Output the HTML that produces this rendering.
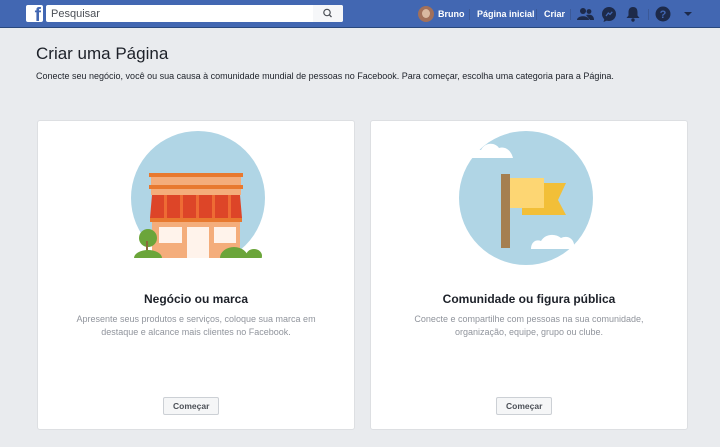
<!DOCTYPE html>
<html><head><meta charset="utf-8"><style>
*{margin:0;padding:0;box-sizing:border-box}
body{width:720px;height:447px;background:#e9ebee;font-family:"Liberation Sans",Arial,sans-serif;position:relative;overflow:hidden}
.bar{position:absolute;left:0;top:0;width:720px;height:28px;background:#4267b2;border-bottom:1px solid #29487d}
.logo{position:absolute;left:26px;top:5px;width:17px;height:17px;background:#fff;border-radius:2px;overflow:hidden}
.logo span{position:absolute;right:2px;top:1px;color:#4267b2;font-weight:bold;font-size:19px;line-height:19px}
.search{position:absolute;left:46px;top:5px;width:297px;height:17px;background:#fff;border-radius:2px}
.search span{position:absolute;left:5px;top:3px;font-size:11px;line-height:12px;color:#4b4f56}
.sbtn{position:absolute;right:0;top:0;width:30px;height:17px;background:#f6f7f9;border-radius:0 2px 2px 0}
.nav{position:absolute;top:9px;color:#fff;font-size:9px;font-weight:bold}
.sep{position:absolute;top:9px;width:1px;height:11px;background:#3b5998}
h1{position:absolute;left:36px;top:44px;font-size:17px;font-weight:normal;color:#1d2129}
.sub{position:absolute;left:36px;top:71px;font-size:9px;color:#1d2129}
.card{position:absolute;top:120px;width:318px;height:310px;background:#fff;border:1px solid #dddfe2;border-radius:3px}
.card h2{position:absolute;left:0;width:100%;top:171px;text-align:center;font-size:12px;font-weight:bold;color:#1d2129}
.card p{position:absolute;left:20px;right:20px;top:192px;text-align:center;font-size:9px;line-height:13px;color:#90949c}
.btn{position:absolute;top:276px;height:18px;padding:0 9px;background:#f5f6f7;border:1px solid #ccd0d5;border-radius:2px;font-size:8.5px;font-weight:bold;color:#4b4f56;line-height:16px}
</style></head><body>
<div class="bar">
<div class="logo"><span>f</span></div>
<div class="search"><span>Pesquisar</span><div class="sbtn"><svg width="30" height="17"><circle cx="14" cy="7.5" r="3.2" fill="none" stroke="#4b4f56" stroke-width="1.2"/><line x1="16.3" y1="9.8" x2="18.5" y2="12" stroke="#4b4f56" stroke-width="1.3"/></svg></div></div>
<div style="position:absolute;left:418px;top:6px;width:16px;height:16px;border-radius:50%;background:#a2705a;overflow:hidden"><div style="position:absolute;left:4px;top:3px;width:8px;height:9px;border-radius:50%;background:#d9b8a0"></div></div>
<div class="nav" style="left:438px">Bruno</div>
<div class="sep" style="left:469px"></div>
<div class="nav" style="left:477px">Página inicial</div>
<div class="sep" style="left:536px"></div>
<div class="nav" style="left:544px">Criar</div>
<div class="sep" style="left:570px"></div>
<svg style="position:absolute;left:576px;top:5px" width="125" height="19">
<g fill="#1d2a4a"><circle cx="7" cy="6" r="3"/><path d="M1 15c0-5 12-5 12 0z"/><circle cx="13" cy="6.5" r="2.4"/><path d="M10 10c4-1 8 0 8 5h-4z"/>
<circle cx="33" cy="9" r="7"/><path d="M27.5 17l1-3.5 2.5 2z"/>
<path d="M57 2c3.5 0 4.5 2.5 4.5 5.5v3l2 2.5h-13l2-2.5v-3c0-3 1-5.5 4.5-5.5z"/><circle cx="57" cy="15" r="1.7"/>
<circle cx="87" cy="9" r="7.5"/>
<path d="M108 7h8l-4 4z"/></g>
<path d="M30 11l2.3-3 1.7 1.4 2.3-2.6" stroke="#4267b2" stroke-width="1.3" fill="none"/>
<text x="87" y="13" text-anchor="middle" font-size="11" font-weight="bold" fill="#4267b2" font-family="Liberation Sans">?</text>
<rect x="72" y="4" width="1" height="11" fill="#3b5998"/>
</svg>
</div>
<h1>Criar uma Página</h1>
<div class="sub">Conecte seu negócio, você ou sua causa à comunidade mundial de pessoas no Facebook. Para começar, escolha uma categoria para a Página.</div>

<div class="card" style="left:37px">
<svg style="position:absolute;left:0;top:0" width="318" height="150">
<circle cx="160" cy="77" r="67" fill="#b0d5e5"/>
<rect x="111" y="52" width="94" height="4" fill="#e8792f"/>
<rect x="113" y="56" width="90" height="9" fill="#f4ad7b"/>
<rect x="111" y="64" width="94" height="4" fill="#e8792f"/>
<rect x="113" y="68" width="90" height="6" fill="#f4ad7b"/>
<path d="M114 74h88l2 23h-92z" fill="#dd4528"/>
<g fill="#ee6b34"><rect x="126" y="74" width="3" height="23"/><rect x="142" y="74" width="3" height="23"/><rect x="158" y="74" width="3" height="23"/><rect x="174" y="74" width="3" height="23"/><rect x="190" y="74" width="3" height="23"/></g>
<rect x="112" y="97" width="92" height="4" fill="#e8792f"/>
<rect x="114" y="101" width="88" height="37" fill="#f4ad7b"/>
<rect x="121" y="106" width="23" height="16" fill="#fff3eb"/>
<rect x="149" y="106" width="22" height="32" fill="#fff3eb"/>
<rect x="176" y="106" width="22" height="16" fill="#fff3eb"/>
<circle cx="110" cy="117" r="9" fill="#6ba53a"/>
<rect x="108" y="120" width="2" height="16" fill="#8a6a3a"/>
<ellipse cx="110" cy="137" rx="14" ry="8" fill="#6ba53a"/>
<ellipse cx="196" cy="137" rx="14" ry="11" fill="#6ba53a"/>
<ellipse cx="216" cy="135" rx="8" ry="7" fill="#6ba53a"/>
<rect x="90" y="137" width="140" height="13" fill="#fff"/>
</svg>
<h2>Negócio ou marca</h2>
<p>Apresente seus produtos e serviços, coloque sua marca em destaque e alcance mais clientes no Facebook.</p>
<div class="btn" style="left:125px">Começar</div>
</div>

<div class="card" style="left:370px">
<svg style="position:absolute;left:0;top:0" width="318" height="150">
<circle cx="155" cy="77" r="67" fill="#b0d5e5"/>
<path d="M82 37h60c-2-8-8-12-14-10-4-6-14-6-18 2-6-2-10 2-11 8z" fill="#fff"/>
<rect x="130" y="53" width="9" height="74" fill="#a57f50"/>
<path d="M151 62h44l-8 17 8 15h-44z" fill="#f2bf38"/>
<rect x="139" y="57" width="34" height="30" fill="#fdd673"/>
<path d="M160 128c0-7 5-10 10-8 4-7 14-8 20-3 6-3 12 0 13 6v5z" fill="#fff"/>
</svg>
<h2>Comunidade ou figura pública</h2>
<p>Conecte e compartilhe com pessoas na sua comunidade, organização, equipe, grupo ou clube.</p>
<div class="btn" style="left:125px">Começar</div>
</div>
</body></html>
